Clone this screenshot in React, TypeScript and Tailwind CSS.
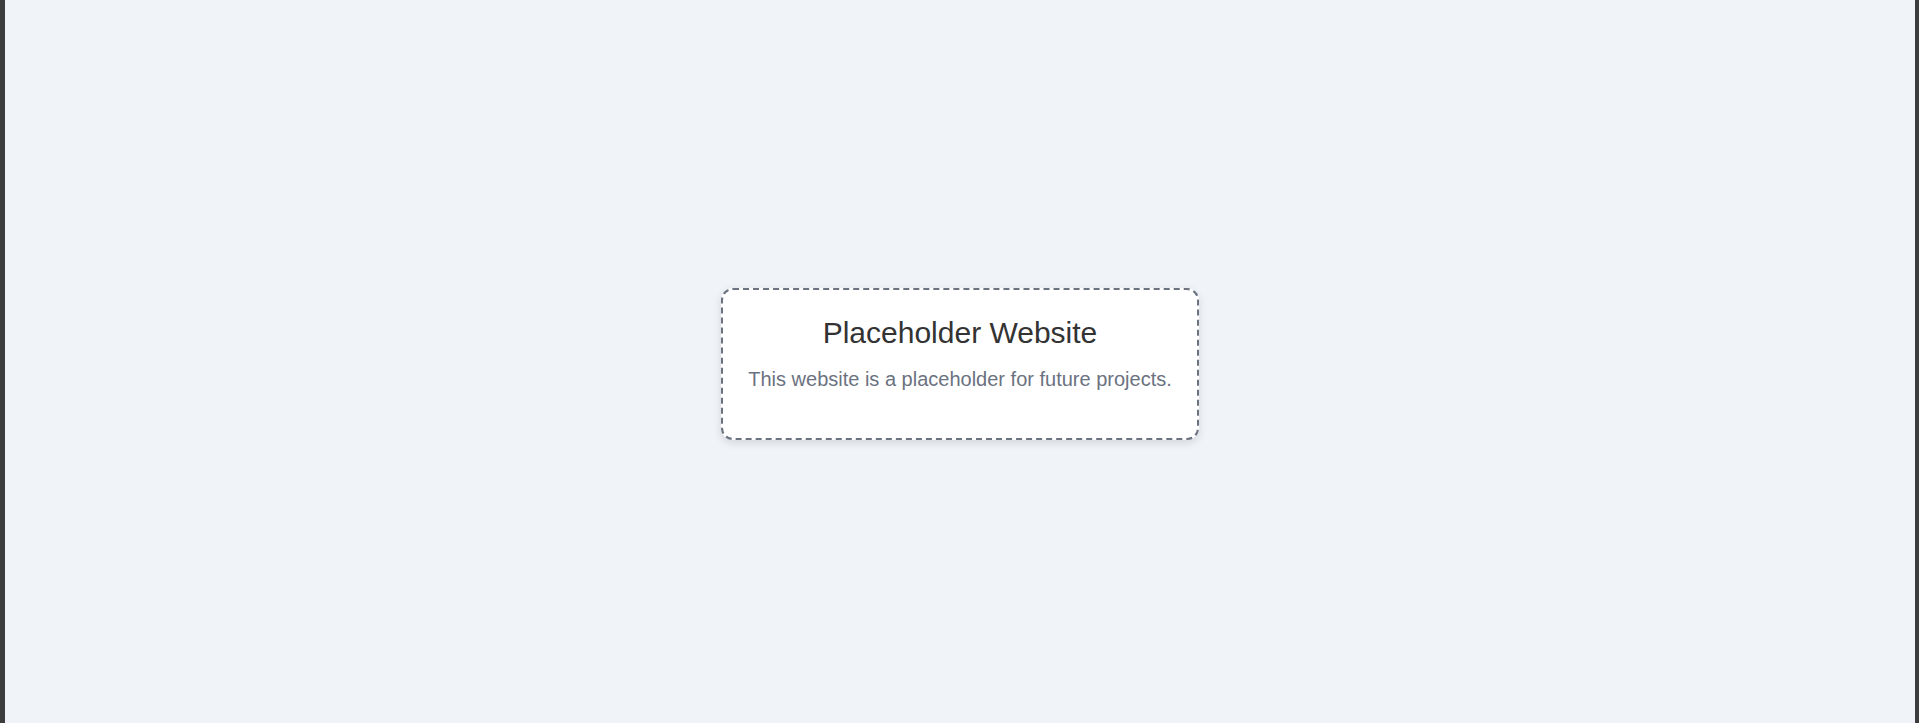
const App = () => {
  return (
    <div className="flex h-screen w-full bg-[#3c3c3c]">
      <div className="w-[5px] shrink-0"></div>
      <main className="flex flex-1 items-center justify-center bg-[#f0f4f8]">
        <div className="mt-[5px] w-[478px] rounded-[12px] border-2 border-dashed border-[#6b7280] bg-white px-[25px] pt-[26px] pb-[47px] text-center shadow-[0_3px_8px_rgba(0,0,0,0.12)]" style={{ fontFamily: '"Liberation Sans", Arial, sans-serif' }}>
          <h1 className="mb-[18px] text-[30px] leading-[normal] font-normal text-[#333333]">Placeholder Website</h1>
          <p className="text-[20px] leading-[normal] text-[#6b7280]">This website is a placeholder for future projects.</p>
        </div>
      </main>
      <div className="w-[4px] shrink-0"></div>
    </div>
  );
};

export default App;
